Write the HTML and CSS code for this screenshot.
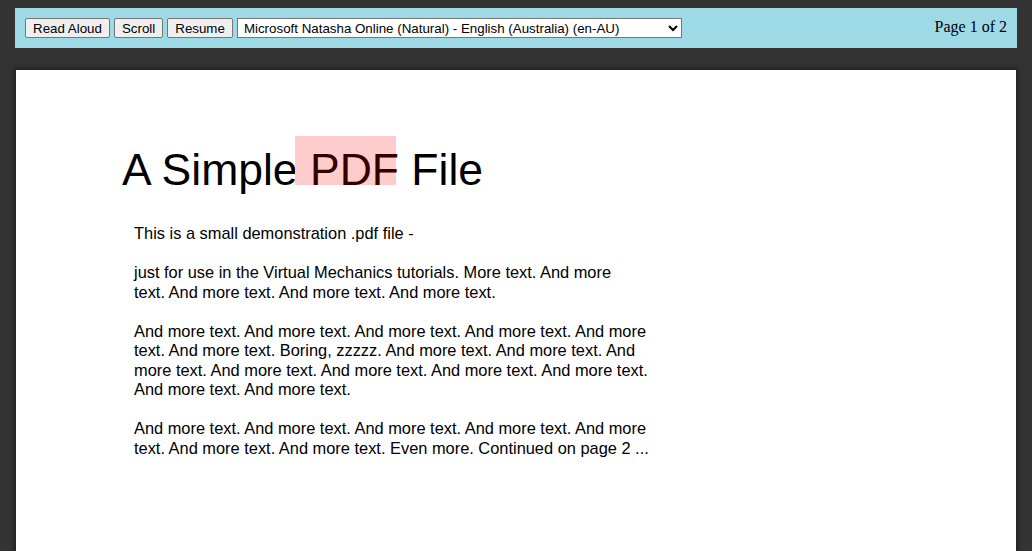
FILE: index.html
```html
<!DOCTYPE html>
<html lang="en">
<head>
  <meta charset="UTF-8" />
  <title>PDF Reader</title>
  <link rel="stylesheet" href="styles.css">
</head>
<body>

  <div class="toolbar">
    <div class="controls">
      <button type="button">Read Aloud</button>
      <button type="button">Scroll</button>
      <button type="button">Resume</button>
      <select id="voice">
        <option>Microsoft Natasha Online (Natural) - English (Australia) (en-AU)</option>
      </select>
    </div>
    <div class="pages">Page <span id="pageNum">1</span> of <span id="pageCount">2</span></div>
  </div>

  <div class="page">
    <h1>A Simple<span class="hl"> PDF</span> File</h1>

    <div class="text">
      <p>This is a small demonstration .pdf file -</p>
      <p>just for use in the Virtual Mechanics tutorials. More text. And more<br>
        text. And more text. And more text. And more text.</p>
      <p>And more text. And more text. And more text. And more text. And more<br>
        text. And more text. Boring, zzzzz. And more text. And more text. And<br>
        more text. And more text. And more text. And more text. And more text.<br>
        And more text. And more text.</p>
      <p>And more text. And more text. And more text. And more text. And more<br>
        text. And more text. And more text. Even more. Continued on page 2 ...</p>
    </div>
  </div>

</body>
</html>
```

FILE: styles.css
```css
* { box-sizing: border-box; }

body {
  margin: 0;
  padding: 8px 15px 0;
  background: #333;
  font-family: 'Liberation Sans', Arial, sans-serif;
  overflow: hidden;
}

.toolbar {
  background: #9ed9e6;
  height: 40px;
  padding: 10px 10px 0;
  display: flex;
  justify-content: space-between;
  align-items: flex-start;
}

.controls {
  display: flex;
  gap: 4px;
}

button, select {
  font-family: 'Liberation Sans', Arial, sans-serif;
  font-size: 13.333px;
  height: 20px;
  color: #000;
}

button {
  padding: 0 7px;
  background: #efefef;
  border: 1px solid #767676;
  border-radius: 2px;
}

select {
  width: 445px;
  padding: 0 2px;
  background: #fff;
  border: 1px solid #767676;
  border-radius: 0;
}

.pages {
  font-family: 'Liberation Serif', 'Times New Roman', serif;
  font-size: 16px;
  line-height: 18px;
  color: #000;
}

.page {
  margin: 22px 1px 0;
  height: 600px;
  background: #fff;
  padding: 75px 0 0 106px;
  box-shadow: 0 0 4px 2px rgba(0, 0, 0, 0.35);
}

h1 {
  margin: 0;
  font-weight: normal;
  font-size: 44.5px;
  line-height: 49px;
  color: #000;
}

.hl {
  padding-top: 8.6px;
  margin-left: -3px;
  padding-left: 3px;
  padding-right: 0;
  background: linear-gradient(#ffcccc, #ffcccc) top left / 101px 49px no-repeat;
  color: #300;
}

.text {
  margin: 30px 0 0 12px;
  font-size: 16.4px;
  line-height: 19.5px;
  color: #000;
}

.text p {
  margin: 0 0 19.5px;
}
```
